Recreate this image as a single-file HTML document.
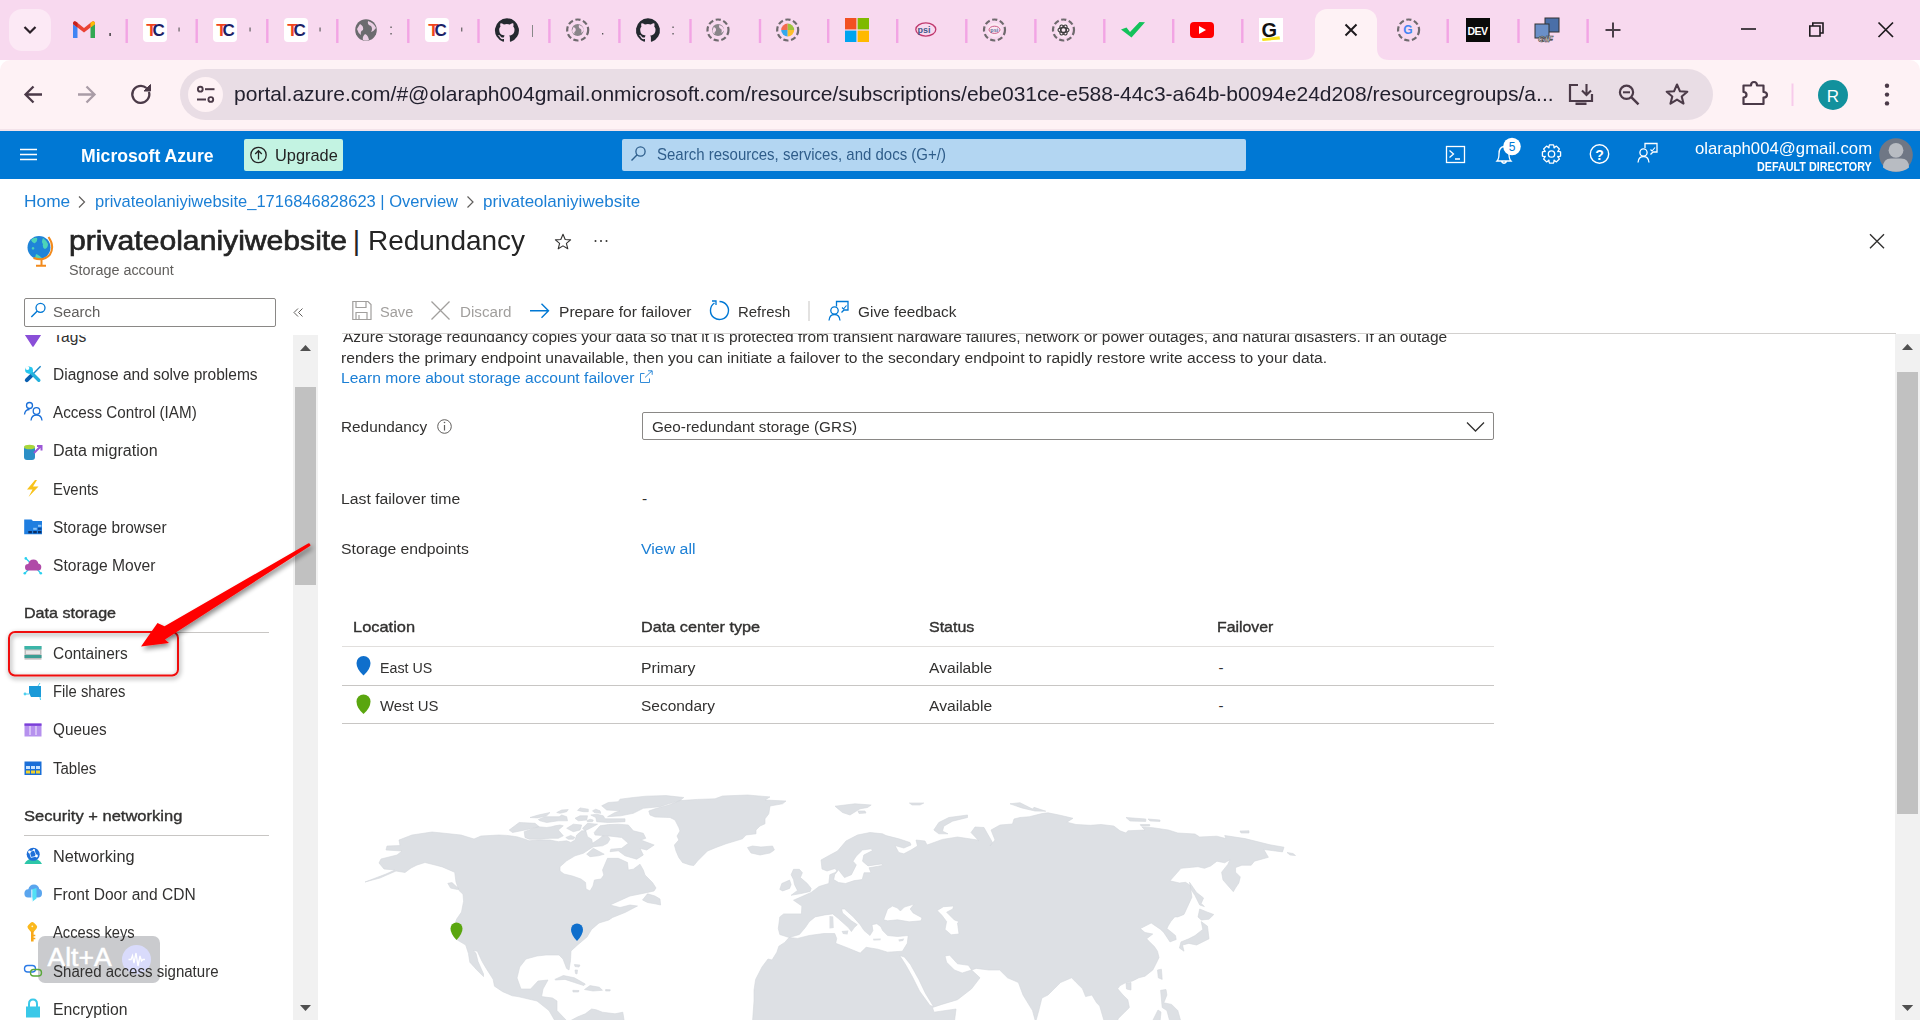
<!DOCTYPE html>
<html><head><meta charset="utf-8"><title>privateolaniyiwebsite | Redundancy - Microsoft Azure</title>
<style>
*{margin:0;padding:0;box-sizing:border-box}
html,body{width:1920px;height:1020px;overflow:hidden;background:#fff;font-family:"Liberation Sans",sans-serif;position:relative}
.a{position:absolute}
.t{position:absolute;white-space:nowrap;line-height:1;font-family:"Liberation Sans",sans-serif}
svg{position:absolute;overflow:visible}

</style></head><body>
<!-- tab strip -->
<div class="a" style="left:0;top:0;width:1920px;height:60px;background:#f8d9ef"></div>
<div class="a" style="left:9px;top:9px;width:42px;height:42px;border-radius:13px;background:#fce9f5"></div>
<svg style="left:0;top:0" width="1920" height="60">
  <path d="M24.5 27 L30 32.5 L35.5 27" fill="none" stroke="#2a2028" stroke-width="2.2"/>
</svg>
<!-- toolbar -->
<div class="a" style="left:0;top:60px;width:1920px;height:69px;background:#fef2f5;border-radius:10px 10px 0 0"></div>
<div class="a" style="left:0;top:129px;width:1920px;height:2px;background:#f3e3ea"></div>
<!-- active tab -->
<div class="a" style="left:1315px;top:9px;width:62px;height:52px;background:#fef2f5;border-radius:12px 12px 0 0"></div>
<svg style="left:0;top:0" width="1920" height="131">
  <path d="M1303 60 Q1315 60 1315 48 L1315 60 Z" fill="#fef2f5"/>
  <path d="M1389 60 Q1377 60 1377 48 L1377 60 Z" fill="#fef2f5"/>
  <path d="M1345.5 24.5 L1356.5 35.5 M1356.5 24.5 L1345.5 35.5" stroke="#1f1a1e" stroke-width="2"/>
</svg>
<!-- url bar -->
<div class="a" style="left:180px;top:69px;width:1533px;height:51px;border-radius:26px;background:#e9dde5"></div>
<div class="a" style="left:188px;top:77px;width:35px;height:35px;border-radius:50%;background:#fef2f5"></div>
<svg style="left:0;top:0" width="1920" height="60">
<rect x="125.5" y="19" width="2.4" height="24" fill="#f2a4e4"/>
<rect x="195.5" y="19" width="2.4" height="24" fill="#f2a4e4"/>
<rect x="266.1" y="19" width="2.4" height="24" fill="#f2a4e4"/>
<rect x="336.1" y="19" width="2.4" height="24" fill="#f2a4e4"/>
<rect x="407.1" y="19" width="2.4" height="24" fill="#f2a4e4"/>
<rect x="477.3" y="19" width="2.4" height="24" fill="#f2a4e4"/>
<rect x="548.1999999999999" y="19" width="2.4" height="24" fill="#f2a4e4"/>
<rect x="618.1999999999999" y="19" width="2.4" height="24" fill="#f2a4e4"/>
<rect x="689.3" y="19" width="2.4" height="24" fill="#f2a4e4"/>
<rect x="758.8" y="19" width="2.4" height="24" fill="#f2a4e4"/>
<rect x="827.0" y="19" width="2.4" height="24" fill="#f2a4e4"/>
<rect x="896.0" y="19" width="2.4" height="24" fill="#f2a4e4"/>
<rect x="965.0999999999999" y="19" width="2.4" height="24" fill="#f2a4e4"/>
<rect x="1034.2" y="19" width="2.4" height="24" fill="#f2a4e4"/>
<rect x="1103.1" y="19" width="2.4" height="24" fill="#f2a4e4"/>
<rect x="1172.0" y="19" width="2.4" height="24" fill="#f2a4e4"/>
<rect x="1241.1" y="19" width="2.4" height="24" fill="#f2a4e4"/>
<rect x="1446.5" y="19" width="2.4" height="24" fill="#f2a4e4"/>
<rect x="1517.3" y="19" width="2.4" height="24" fill="#f2a4e4"/>
<rect x="1586.3999999999999" y="19" width="2.4" height="24" fill="#f2a4e4"/>
<g transform="translate(73,21)">
<path d="M0 3 L0 17 L4.5 17 L4.5 6.5 Z" fill="#4285f4"/>
<path d="M17.5 6.5 L17.5 17 L22 17 L22 3 Z" fill="#34a853"/>
<path d="M0 3 Q0 -1 3.5 1 L11 7 L18.5 1 Q22 -1 22 3 L17.5 6.5 L11 11.5 L4.5 6.5 Z" fill="#ea4335"/>
<path d="M17.5 6.5 L22 3 Q22 -1 18.5 1 L17.5 1.8Z" fill="#fbbc04"/>
<path d="M0 3 Q0 -1 3.5 1 L4.5 1.8 L4.5 6.5Z" fill="#c5221f"/>
</g>
<rect x="143" y="18" width="24" height="24" rx="4" fill="#fff"/>
<text x="146.2" y="36" font-family="Liberation Sans" font-weight="700" font-size="17" fill="#f0451c" letter-spacing="-2">T</text>
<text x="152.5" y="36" font-family="Liberation Sans" font-weight="700" font-size="17" fill="#1b2266">C</text>
<rect x="213" y="18" width="24" height="24" rx="4" fill="#fff"/>
<text x="216.2" y="36" font-family="Liberation Sans" font-weight="700" font-size="17" fill="#f0451c" letter-spacing="-2">T</text>
<text x="222.5" y="36" font-family="Liberation Sans" font-weight="700" font-size="17" fill="#1b2266">C</text>
<rect x="284" y="18" width="24" height="24" rx="4" fill="#fff"/>
<text x="287.2" y="36" font-family="Liberation Sans" font-weight="700" font-size="17" fill="#f0451c" letter-spacing="-2">T</text>
<text x="293.5" y="36" font-family="Liberation Sans" font-weight="700" font-size="17" fill="#1b2266">C</text>
<rect x="425" y="18" width="24" height="24" rx="4" fill="#fff"/>
<text x="428.2" y="36" font-family="Liberation Sans" font-weight="700" font-size="17" fill="#f0451c" letter-spacing="-2">T</text>
<text x="434.5" y="36" font-family="Liberation Sans" font-weight="700" font-size="17" fill="#1b2266">C</text>
<circle cx="366" cy="30" r="10.8" fill="#6b6b6e"/>
<path d="M360 24 q4 2 3 6 q-3 1 -2 5 q-3-2-4-6z M368 21 q-1 4 3 5 q2 3 0 6 q3-1 5-4 q-2-5-8-7z M365 34 q3 1 4 6 q-3 1 -6 0 q-1-3 2-6z" fill="#f8d9ef" opacity=".9"/>
<g transform="translate(495,18)"><path fill="#24292f" d="M12 0.3a12 12 0 0 0-3.8 23.4c.6.1.8-.3.8-.6v-2c-3.3.7-4-1.6-4-1.6-.6-1.4-1.4-1.8-1.4-1.8-1-.7.1-.7.1-.7 1.2.1 1.8 1.2 1.8 1.2 1 1.8 2.8 1.3 3.5 1 0-.8.4-1.3.7-1.6-2.7-.3-5.5-1.3-5.5-6 0-1.2.5-2.3 1.3-3.1-.2-.4-.6-1.6 0-3.2 0 0 1-.3 3.4 1.2a11.5 11.5 0 0 1 6 0c2.3-1.5 3.3-1.2 3.3-1.2.6 1.6.2 2.8 0 3.2.9.8 1.3 1.9 1.3 3.2 0 4.6-2.8 5.6-5.5 5.9.5.4.9 1 .9 2.2v3.3c0 .3.1.7.8.6A12 12 0 0 0 12 .3"/></g>
<g transform="translate(636,18)"><path fill="#24292f" d="M12 0.3a12 12 0 0 0-3.8 23.4c.6.1.8-.3.8-.6v-2c-3.3.7-4-1.6-4-1.6-.6-1.4-1.4-1.8-1.4-1.8-1-.7.1-.7.1-.7 1.2.1 1.8 1.2 1.8 1.2 1 1.8 2.8 1.3 3.5 1 0-.8.4-1.3.7-1.6-2.7-.3-5.5-1.3-5.5-6 0-1.2.5-2.3 1.3-3.1-.2-.4-.6-1.6 0-3.2 0 0 1-.3 3.4 1.2a11.5 11.5 0 0 1 6 0c2.3-1.5 3.3-1.2 3.3-1.2.6 1.6.2 2.8 0 3.2.9.8 1.3 1.9 1.3 3.2 0 4.6-2.8 5.6-5.5 5.9.5.4.9 1 .9 2.2v3.3c0 .3.1.7.8.6A12 12 0 0 0 12 .3"/></g>
<circle cx="577.7" cy="30" r="10.5" fill="none" stroke="#6f6a6e" stroke-width="2.2" stroke-dasharray="5.2 2.6"/><circle cx="577.7" cy="30" r="6" fill="#8a858a"/><path d="M573.5 27 q3 1 2 4 q-2 1-1 3 q-2-1-2.5-3z M579 25 q-1 3 2 4 q1 2 0 4 q2-1 3-3 q-1-4-5-5z" fill="#f8d9ef"/>
<circle cx="718" cy="30" r="10.5" fill="none" stroke="#6f6a6e" stroke-width="2.2" stroke-dasharray="5.2 2.6"/><circle cx="718" cy="30" r="6" fill="#8a858a"/><path d="M713.8 27 q3 1 2 4 q-2 1-1 3 q-2-1-2.5-3z M719.3 25 q-1 3 2 4 q1 2 0 4 q2-1 3-3 q-1-4-5-5z" fill="#f8d9ef"/>
<circle cx="787.7" cy="30" r="10.5" fill="none" stroke="#6f6a6e" stroke-width="2.2" stroke-dasharray="5.2 2.6"/><path d="M787.7 30 L787.7 23.5 A6.5 6.5 0 0 0 781.2 30Z" fill="#f26b4f"/><path d="M787.7 30 L794.2 30 A6.5 6.5 0 0 0 787.7 23.5Z" fill="#9fc43c"/><path d="M787.7 30 L781.2 30 A6.5 6.5 0 0 0 787.7 36.5Z" fill="#35a8ec"/><path d="M787.7 30 L787.7 36.5 A6.5 6.5 0 0 0 794.2 30Z" fill="#fbbf2d"/>
<rect x="845" y="18" width="11.4" height="11.4" fill="#f25022"/><rect x="857.6" y="18" width="11.4" height="11.4" fill="#7fba00"/><rect x="845" y="30.6" width="11.4" height="11.4" fill="#00a4ef"/><rect x="857.6" y="30.6" width="11.4" height="11.4" fill="#ffb900"/>
<ellipse cx="925.8" cy="29.5" rx="10" ry="6.6" fill="none" stroke="#c0396e" stroke-width="1.3"/><text x="917.5" y="33" font-family="Liberation Sans" font-weight="700" font-size="9" fill="#3f5a8a">psi</text>
<circle cx="994.5" cy="30" r="10.5" fill="none" stroke="#6f6a6e" stroke-width="2.2" stroke-dasharray="5.2 2.6"/><circle cx="994.5" cy="30" r="7" fill="#fbe8f3"/><ellipse cx="994.5" cy="29.8" rx="5.5" ry="3.6" fill="none" stroke="#c0396e" stroke-width=".8"/><text x="990.3" y="32" font-family="Liberation Sans" font-weight="700" font-size="5.5" fill="#5a6e9a">psi</text>
<circle cx="1063.5" cy="30" r="10.5" fill="none" stroke="#6f6a6e" stroke-width="2.2" stroke-dasharray="5.2 2.6"/><circle cx="1063.5" cy="30" r="7.5" fill="#fbe8f3"/><g fill="none" stroke="#3a3a3a" stroke-width="1.1"><ellipse cx="1063.5" cy="30" rx="5.5" ry="2.4"/><ellipse cx="1063.5" cy="30" rx="5.5" ry="2.4" transform="rotate(60 1063.5 30)"/><ellipse cx="1063.5" cy="30" rx="5.5" ry="2.4" transform="rotate(120 1063.5 30)"/></g>
<path d="M1121 29.5 L1126.5 27.5 L1130 32 L1139.5 22 L1145 22.3 L1131.5 37.4 Z" fill="#14c25b"/>
<rect x="1190" y="22" width="24" height="16" rx="4" fill="#ff0000"/><path d="M1199 26 L1206 30 L1199 34 Z" fill="#fff"/>
<rect x="1259" y="18" width="24" height="24" fill="#fff"/><text x="1261.5" y="37" font-family="Liberation Sans" font-weight="700" font-size="20" fill="#111">G</text><path d="M1262 38.5 L1279.5 36.3 L1280 39.5 L1262.5 41 Z" fill="#f8e01a"/>
<circle cx="1408.6" cy="30" r="10.5" fill="none" stroke="#6f6a6e" stroke-width="2.2" stroke-dasharray="5.2 2.6"/><text x="1403.2" y="34.4" font-family="Liberation Sans" font-weight="700" font-size="12" fill="#4285f4">G</text>
<rect x="1466" y="18" width="24" height="24" fill="#0a0a0a"/><text x="1467.6" y="35.2" font-family="Liberation Sans" font-weight="700" font-size="10.5" fill="#fff" letter-spacing="-0.6">DEV</text>
<g><rect x="1545" y="18" width="14" height="14" fill="#4a6fa8" stroke="#333" stroke-width="1"/><rect x="1535" y="24" width="14" height="14" fill="#6a8fc8" stroke="#333" stroke-width="1"/><text x="1538" y="42" font-family="Liberation Sans" font-weight="700" font-style="italic" font-size="9" fill="#fff" stroke="#333" stroke-width=".6">GIF</text></g>
<path d="M1613 22.5 V37.5 M1605.5 30 H1620.5" stroke="#4b3f49" stroke-width="2"/>
<path d="M1741 29 H1756" stroke="#1e1a1e" stroke-width="1.6"/>
<path d="M1809.8 26 H1820 V36 H1809.8 Z M1812.8 26 V23 H1823 V33 H1820" fill="none" stroke="#1e1a1e" stroke-width="1.6"/>
<path d="M1878.5 22.5 L1893 37 M1893 22.5 L1878.5 37" stroke="#1e1a1e" stroke-width="1.7"/>
<rect x="109.4" y="33" width="1.4" height="3" fill="#333"/>
<rect x="178.5" y="27.5" width="1.1" height="4" fill="#555"/>
<rect x="249.5" y="27.5" width="1.1" height="4" fill="#555"/>
<rect x="319.5" y="27.5" width="1.1" height="4" fill="#555"/>
<rect x="390.4" y="26.5" width="1.3" height="1.5" fill="#555"/><rect x="390.4" y="33" width="1.3" height="1.5" fill="#555"/>
<rect x="461.2" y="27.5" width="1.1" height="4" fill="#555"/>
<rect x="532.0" y="25" width="1" height="12" fill="#888"/>
<rect x="602.0" y="33" width="1.3" height="1.5" fill="#555"/>
<rect x="672.4" y="26.5" width="1.3" height="1.5" fill="#555"/><rect x="672.4" y="33" width="1.3" height="1.5" fill="#555"/>
</svg><svg style="left:0;top:0" width="1920" height="131">
<path d="M42 94.5 H25.5 M33.5 86.5 L25.5 94.5 L33.5 102.5" fill="none" stroke="#4b3a48" stroke-width="2.3"/>
<path d="M78 94.5 H94.5 M86.5 86.5 L94.5 94.5 L86.5 102.5" fill="none" stroke="#a99ca6" stroke-width="2.3"/>
<path d="M149 92 A8.5 8.5 0 1 1 146.5 88" fill="none" stroke="#4b3a48" stroke-width="2.3"/><path d="M150.5 84.5 V91 H144 Z" fill="#4b3a48" stroke="#4b3a48" stroke-width="1"/>
<circle cx="200.3" cy="89.2" r="2.4" fill="none" stroke="#4b3a48" stroke-width="1.9"/><path d="M205 89.2 H214.5" stroke="#4b3a48" stroke-width="2"/>
<circle cx="210.8" cy="99.5" r="2.4" fill="none" stroke="#4b3a48" stroke-width="1.9"/><path d="M197 99.5 H206" stroke="#4b3a48" stroke-width="2"/>
<path d="M1578 85 H1570 V101 H1592 V94" fill="none" stroke="#4b3a48" stroke-width="2.2"/><path d="M1586.5 84 V95 M1582 90.5 L1586.5 95 L1591 90.5" fill="none" stroke="#4b3a48" stroke-width="2.1"/><rect x="1575.5" y="102.5" width="11" height="2.5" fill="#4b3a48"/>
<circle cx="1626.5" cy="92.3" r="6.6" fill="none" stroke="#4b3a48" stroke-width="2.2"/><path d="M1623 92.3 H1630" stroke="#4b3a48" stroke-width="2"/><path d="M1631.5 97.3 L1638.5 104.3" stroke="#4b3a48" stroke-width="2.4"/>
<path d="M1677 84.5 L1680 91.3 L1687.3 91.8 L1681.7 96.5 L1683.5 103.6 L1677 99.6 L1670.5 103.6 L1672.3 96.5 L1666.7 91.8 L1674 91.3 Z" fill="none" stroke="#4b3a48" stroke-width="2.1" stroke-linejoin="round"/>
<path d="M1743.5 85.5 H1751 Q1751 82 1754 82 Q1757 82 1757 85.5 H1763.5 V92 Q1767 92 1767 94.8 Q1767 97.6 1763.5 97.6 V104 H1743.5 V97.5 Q1746.5 97.5 1746.5 94.8 Q1746.5 92 1743.5 92 Z" fill="none" stroke="#4b3a48" stroke-width="2.2" stroke-linejoin="round"/>
<rect x="1791.5" y="83.5" width="2" height="22.5" fill="#f7cbeb"/>
<circle cx="1833" cy="95" r="15" fill="#12919d"/><text x="1833" y="101.5" text-anchor="middle" font-family="Liberation Sans" font-size="17" fill="#fff">R</text>
<circle cx="1887" cy="85.8" r="2.2" fill="#4b3a48"/><circle cx="1887" cy="94.6" r="2.2" fill="#4b3a48"/><circle cx="1887" cy="103.4" r="2.2" fill="#4b3a48"/>
</svg><div class="t" style="left:234.425px;top:83.42px;font-size:21px;color:#22202e;transform:scaleX(1.0010);transform-origin:0 0;">portal.azure.com/#@olaraph004gmail.onmicrosoft.com/resource/subscriptions/ebe031ce-e588-44c3-a64b-b0094e24d208/resourcegroups/a...</div>

<div class="a" style="left:0;top:131px;width:1920px;height:48px;background:#0078d4"></div>
<div class="a" style="left:244px;top:139px;width:99px;height:31.5px;background:#c3f3e2;border-radius:2px"></div>
<div class="a" style="left:622px;top:139px;width:624px;height:32px;background:#b3d6f2;border-radius:2px"></div>
<svg style="left:0;top:131px" width="1920" height="48">
<path d="M20 18.5 H37 M20 23.5 H37 M20 28.5 H37" stroke="#fff" stroke-width="1.3"/>
<circle cx="258.5" cy="24" r="7.7" fill="none" stroke="#242424" stroke-width="1.3"/><path d="M258.5 28.5 V19.8 M255.2 23 L258.5 19.7 L261.8 23" fill="none" stroke="#242424" stroke-width="1.3"/>
<circle cx="640.5" cy="20.5" r="4.6" fill="none" stroke="#2e5e8c" stroke-width="1.3"/><path d="M637.2 23.8 L631.5 29.5" stroke="#2e5e8c" stroke-width="1.4"/>
<rect x="1446.5" y="15.5" width="18" height="16" fill="none" stroke="#fff" stroke-width="1.3"/><path d="M1449.5 19.5 L1453.5 23 L1449.5 26.5 M1455 28 H1460" fill="none" stroke="#fff" stroke-width="1.3"/>
<path d="M1497 30 Q1499 28 1499 23 Q1499 16 1504 15.5 Q1509 16 1509 23 Q1509 28 1511 30 Z M1501.5 30.5 Q1504 34 1506.5 30.5" fill="none" stroke="#fff" stroke-width="1.3"/>
<circle cx="1512" cy="15.5" r="8.8" fill="#fff"/><text x="1512" y="20" text-anchor="middle" font-family="Liberation Sans" font-size="12" fill="#0078d4">5</text>
<path d="M1560.58 20.97 L1560.58 25.03 L1557.71 25.77 L1557.85 25.43 L1559.35 27.98 L1556.48 30.85 L1553.93 29.35 L1554.27 29.21 L1553.53 32.08 L1549.47 32.08 L1548.73 29.21 L1549.07 29.35 L1546.52 30.85 L1543.65 27.98 L1545.15 25.43 L1545.29 25.77 L1542.42 25.03 L1542.42 20.97 L1545.29 20.23 L1545.15 20.57 L1543.65 18.02 L1546.52 15.15 L1549.07 16.65 L1548.73 16.79 L1549.47 13.92 L1553.53 13.92 L1554.27 16.79 L1553.93 16.65 L1556.48 15.15 L1559.35 18.02 L1557.85 20.57 L1557.71 20.23 Z" fill="none" stroke="#fff" stroke-width="1.3" stroke-linejoin="round"/><circle cx="1551.5" cy="23" r="3.2" fill="none" stroke="#fff" stroke-width="1.3"/>
<circle cx="1599.5" cy="23" r="9.2" fill="none" stroke="#fff" stroke-width="1.4"/><text x="1599.5" y="28.5" text-anchor="middle" font-family="Liberation Sans" font-size="14" font-weight="700" fill="#fff">?</text>
<path d="M1645 17 V12.5 H1657 V21 H1653 L1650.5 23.5" fill="none" stroke="#fff" stroke-width="1.3"/><circle cx="1643.5" cy="21.5" r="3.6" fill="none" stroke="#fff" stroke-width="1.3"/><path d="M1638 31.5 Q1638.5 25.5 1643.5 25.5 Q1648.5 25.5 1649 31.5" fill="none" stroke="#fff" stroke-width="1.3"/><path d="M1650.5 18.5 L1652 20 L1655 16.5" fill="none" stroke="#fff" stroke-width="1.1"/>
<circle cx="1896" cy="24" r="16.8" fill="#6f7785"/><circle cx="1896" cy="19.3" r="7.4" fill="#b8bcc2"/><path d="M1883 36.5 Q1883 27.5 1891 27.5 H1901 Q1909 27.5 1909 36.5 Q1903.5 40.8 1896 40.8 Q1888.5 40.8 1883 36.5Z" fill="#b8bcc2"/>
</svg>
<div class="t" style="left:80.605px;top:146.66px;font-size:18.6px;color:#fff;font-weight:700;transform:scaleX(0.9481);transform-origin:0 0;">Microsoft Azure</div>

<div class="t" style="left:274.785px;top:146.89px;font-size:16.2px;color:#242424;transform:scaleX(1.0116);transform-origin:0 0;">Upgrade</div>

<div class="t" style="left:656.8225px;top:146.71px;font-size:15.7px;color:#2f5d8a;transform:scaleX(0.9565);transform-origin:0 0;">Search resources, services, and docs (G+/)</div>

<div class="t" style="left:1694.785px;top:140.49px;font-size:16.2px;color:#fff;transform:scaleX(1.0346);transform-origin:0 0;">olaraph004@gmail.com</div>

<div class="t" style="left:1757.04px;top:160.76px;font-size:12.8px;color:#fff;font-weight:700;transform:scaleX(0.8422);transform-origin:0 0;">DEFAULT DIRECTORY</div>

<div class="t" style="left:23.535px;top:193.29px;font-size:16.2px;color:#1b7fd5;transform:scaleX(1.0707);transform-origin:0 0;">Home</div>

<div class="t" style="left:94.785px;top:193.29px;font-size:16.2px;color:#1b7fd5;transform:scaleX(1.0194);transform-origin:0 0;">privateolaniyiwebsite_1716846828623 | Overview</div>

<div class="t" style="left:482.785px;top:193.29px;font-size:16.2px;color:#1b7fd5;transform:scaleX(1.0521);transform-origin:0 0;">privateolaniyiwebsite</div>

<svg style="left:0;top:0" width="1920" height="300">
<path d="M79 196.5 L84.5 202 L79 207.5 M467.5 196.5 L473 202 L467.5 207.5" fill="none" stroke="#605e5c" stroke-width="1.2"/>
<circle cx="39" cy="247.5" r="11.5" fill="#1f84d8"/><path d="M31 240 q3 -3 6 -2 q1 3 -2 5 q-2 1 -4 -3z M43 238 q3 2 5 6 q0 4 -3 5 q-3-1-2-5 q-2-2 0-6z M36 254 q3 1 6 4 q-4 1.5 -7 0z M33 247 a1.3 1.3 0 1 0 .1 0z" fill="#4dd4b8"/>
<path d="M48.5 237 Q55 246 50 254.5 Q44 261.5 33.5 258" fill="none" stroke="#f28a1c" stroke-width="2"/><path d="M41.5 260 V265.5 M36 265.8 H46" stroke="#f28a1c" stroke-width="2"/>
<path d="M563 234.3 L565.2 239.5 L570.6 239.9 L566.4 243.4 L567.8 248.8 L563 245.9 L558.2 248.8 L559.6 243.4 L555.4 239.9 L560.8 239.5 Z" fill="none" stroke="#323130" stroke-width="1.1" stroke-linejoin="round"/>
<circle cx="595.5" cy="241" r="1" fill="#323130"/><circle cx="601" cy="241" r="1" fill="#323130"/><circle cx="606.5" cy="241" r="1" fill="#323130"/>
<path d="M1870 234.3 L1884 248.3 M1884 234.3 L1870 248.3" stroke="#323130" stroke-width="1.4"/>
</svg>
<div class="t" style="left:68.6625px;top:225.87px;font-size:28.5px;color:#242424;transform:scaleX(1.0571);transform-origin:0 0;-webkit-text-stroke:0.68px #242424;">privateolaniyiwebsite</div>

<div class="t" style="left:352.8625px;top:225.87px;font-size:28.5px;color:#242424;">|</div>

<div class="t" style="left:368.3625px;top:225.87px;font-size:28.5px;color:#242424;transform:scaleX(0.9810);transform-origin:0 0;">Redundancy</div>

<div class="t" style="left:68.65px;top:263.15px;font-size:14.0px;color:#605e5c;transform:scaleX(1.0275);transform-origin:0 0;">Storage account</div>

<div class="a" style="left:24px;top:298px;width:252px;height:28.5px;border:1px solid #8a8886;border-radius:2px"></div>
<div class="t" style="left:53.06px;top:303.83px;font-size:15.2px;color:#605e5c;transform:scaleX(0.9847);transform-origin:0 0;">Search</div>

<svg style="left:0;top:0" width="330" height="340">
<circle cx="40.5" cy="307.8" r="4.5" fill="none" stroke="#0078d4" stroke-width="1.3"/><path d="M37.3 311 L31.3 317" stroke="#0078d4" stroke-width="1.4"/>
<path d="M298 308.5 L294 312.5 L298 316.5 M302.5 308.5 L298.5 312.5 L302.5 316.5" fill="none" stroke="#605e5c" stroke-width="1"/>
</svg>
<div class="a" style="left:38px;top:936px;width:122px;height:47px;border-radius:7px;background:rgba(150,152,158,0.5)"></div>
<svg style="left:0;top:0" width="300" height="1020"><circle cx="136.5" cy="959.5" r="14.5" fill="#d9dbfb"/></svg>
<div class="a" style="left:0;top:335px;width:293px;height:685px;overflow:hidden">
<div class="a" style="left:0;top:-335px;width:293px;height:1020px">
<div class="t" style="left:53.33px;top:328.54px;font-size:15.6px;color:#323130;">Tags</div>

<div class="t" style="left:53.33px;top:366.99px;font-size:15.6px;color:#323130;transform:scaleX(0.9959);transform-origin:0 0;">Diagnose and solve problems</div>

<div class="t" style="left:53.33px;top:405.24px;font-size:15.6px;color:#323130;transform:scaleX(0.9757);transform-origin:0 0;">Access Control (IAM)</div>

<div class="t" style="left:53.33px;top:443.49px;font-size:15.6px;color:#323130;transform:scaleX(1.0319);transform-origin:0 0;">Data migration</div>

<div class="t" style="left:53.33px;top:481.74px;font-size:15.6px;color:#323130;transform:scaleX(0.9537);transform-origin:0 0;">Events</div>

<div class="t" style="left:53.33px;top:519.99px;font-size:15.6px;color:#323130;transform:scaleX(0.9923);transform-origin:0 0;">Storage browser</div>

<div class="t" style="left:53.33px;top:558.24px;font-size:15.6px;color:#323130;transform:scaleX(1.0016);transform-origin:0 0;">Storage Mover</div>

<div class="t" style="left:53.33px;top:645.99px;font-size:15.6px;color:#323130;transform:scaleX(0.9899);transform-origin:0 0;">Containers</div>

<div class="t" style="left:53.33px;top:684.24px;font-size:15.6px;color:#323130;transform:scaleX(0.9487);transform-origin:0 0;">File shares</div>

<div class="t" style="left:53.33px;top:722.49px;font-size:15.6px;color:#323130;transform:scaleX(0.9807);transform-origin:0 0;">Queues</div>

<div class="t" style="left:53.33px;top:760.74px;font-size:15.6px;color:#323130;transform:scaleX(0.9621);transform-origin:0 0;">Tables</div>

<div class="t" style="left:53.33px;top:848.89px;font-size:15.6px;color:#323130;transform:scaleX(1.0455);transform-origin:0 0;">Networking</div>

<div class="t" style="left:53.33px;top:887.14px;font-size:15.6px;color:#323130;transform:scaleX(0.9981);transform-origin:0 0;">Front Door and CDN</div>

<div class="t" style="left:53.33px;top:925.39px;font-size:15.6px;color:#323130;transform:scaleX(0.9411);transform-origin:0 0;">Access keys</div>

<div class="t" style="left:53.33px;top:963.64px;font-size:15.6px;color:#323130;transform:scaleX(0.9644);transform-origin:0 0;">Shared access signature</div>

<div class="t" style="left:53.33px;top:1001.89px;font-size:15.6px;color:#323130;transform:scaleX(1.0106);transform-origin:0 0;">Encryption</div>

<div class="t" style="left:24.39px;top:606.47px;font-size:14.8px;color:#323130;transform:scaleX(1.0865);transform-origin:0 0;-webkit-text-stroke:0.36px #323130;">Data storage</div>

<div class="t" style="left:24.09px;top:809.47px;font-size:14.8px;color:#323130;transform:scaleX(1.1160);transform-origin:0 0;-webkit-text-stroke:0.36px #323130;">Security + networking</div>

<div class="a" style="left:24px;top:631.5px;width:245px;height:1px;background:#c8c6c4"></div>
<div class="a" style="left:24px;top:834.8px;width:245px;height:1px;background:#c8c6c4"></div>
<svg style="left:0;top:0" width="293" height="1020">
<path d="M24.5 333 H41.5 L33 346 Z" fill="#8a4fd8" stroke="#8a4fd8" stroke-width="1.5" stroke-linejoin="round"/>
<path d="M40.6 366.3 L33.5 373.4" stroke="#1a86c8" stroke-width="1.4"/><path d="M32.2 374.8 L26.8 380.2" stroke="#0a5fb0" stroke-width="4" stroke-linecap="round"/><path d="M30 371.5 L38.8 380.2" stroke="#22b0dc" stroke-width="3.4" stroke-linecap="round"/><path d="M29.2 366.2 A3.6 3.6 0 1 0 32.2 370.8 L31 371.8" fill="#26c6ee"/><circle cx="29.6" cy="370.2" r="3.4" fill="#26c6ee"/><circle cx="27.4" cy="368" r="1.9" fill="#fff"/>
<circle cx="29.5" cy="405.5" r="3" fill="none" stroke="#1a6fd8" stroke-width="1.3"/><circle cx="36.5" cy="411" r="3.3" fill="none" stroke="#1a6fd8" stroke-width="1.3"/><path d="M24.5 414.5 Q25 409.5 29.5 409.5 M31 420.5 Q31.5 415 36.5 415 Q41.5 415 42 420.5" fill="none" stroke="#1a6fd8" stroke-width="1.3"/>
<rect x="24" y="446" width="11" height="14" rx="3" fill="#2b8fc6"/><ellipse cx="29.5" cy="447" rx="5.5" ry="2.3" fill="#a8d63a"/><path d="M34 453 L41 446 M37 446 H41.5 V450.5" fill="none" stroke="#9b57d6" stroke-width="2"/>
<path d="M35 480 L27 489.5 H32.5 L28.5 497 L38.5 486.5 H33 L37 480 Z" fill="#f8c21a"/>
<path d="M24.2 519.6 H31.5 L33 521 H42 V534.3 H24.2 Z" fill="#1f7ee0"/><rect x="28.3" y="531" width="3.6" height="2.3" fill="#0b2f66"/><rect x="33.2" y="531" width="3.6" height="2.3" fill="#0b2f66"/><rect x="38" y="531" width="3.4" height="2.3" fill="#0b2f66"/><rect x="33.2" y="527.8" width="3.6" height="2" fill="#8cc4f8"/><rect x="38" y="527.8" width="3.4" height="2" fill="#0b4d9e"/><rect x="38" y="524.8" width="3.4" height="2" fill="#8cc4f8"/>
<path d="M25.7 558.3 L29.5 562 M24.5 573.6 L28.5 569.5 M41 573.6 L37.5 569.5" stroke="#2ad0ee" stroke-width="1.3"/><circle cx="25.8" cy="558.4" r="1.3" fill="#2ad0ee"/><circle cx="24.8" cy="573.3" r="1.3" fill="#2ad0ee"/><circle cx="40.8" cy="573.3" r="1.3" fill="#2ad0ee"/><path d="M28 570.5 Q25 570.5 25 567.3 Q25 564 28.3 564 Q29 559.5 33.5 559.5 Q37.5 559.5 38.3 563.5 Q41.3 564 41.3 567 Q41.3 570.5 38 570.5Z" fill="#b04aa8"/>
<rect x="24.5" y="646" width="17" height="13.6" fill="#bdbdbd"/><rect x="24.5" y="646" width="17" height="3.4" fill="#3bb5a8"/><rect x="24.5" y="655" width="17" height="3" fill="#3b9e94"/><rect x="26" y="650.5" width="14" height="3.5" fill="#e8e8e8"/>
<path d="M29 686 H41 V697 H31 L29 693 Z" fill="#1a9ad8"/><circle cx="25" cy="694" r="1.4" fill="#4fd0f0"/><path d="M25 694 H29 M38 686 L40 683 M40 697 L40.5 700" stroke="#4fd0f0" stroke-width="1"/>
<rect x="24.5" y="723.5" width="17" height="13" fill="#b691ee"/><rect x="24.5" y="723.5" width="17" height="2.3" fill="#7b3fd8"/><path d="M30 726 V735 M36 726 V735" stroke="#e6d9fa" stroke-width="1.3"/>
<rect x="24.5" y="761.5" width="17" height="13.5" fill="#1a6fd8"/><rect x="26" y="766" width="14" height="3" fill="#c9e4ff"/><rect x="26" y="770.5" width="14" height="3" fill="#f2d22c"/><path d="M30.5 765 V774 M35.5 765 V774" stroke="#1a6fd8" stroke-width="1"/>
<path d="M24.4 864 Q27 858.5 33 858.5 Q39 858.5 42 864 Z" fill="#2cc6a8"/><circle cx="33.2" cy="854.3" r="6.5" fill="#1f6fd8"/><path d="M29.5 852 L34 850 L36.5 856 L31 857.5 Z" fill="none" stroke="#cfe6ff" stroke-width=".9"/><circle cx="29.5" cy="852" r="1.4" fill="#fff"/><circle cx="36.5" cy="856" r="1.4" fill="#fff"/><circle cx="34" cy="850" r="1.1" fill="#fff"/>
<path d="M28 897.5 Q24.4 897.5 24.4 893.5 Q24.4 889.5 28.3 889.3 Q29.5 884.5 34 884.5 Q38.3 884.5 39.3 889 Q42 889.5 42 893.2 Q42 897.5 38 897.5Z" fill="#5aa5ee"/><path d="M31.8 889.5 L36.5 888 V898.5 L32.5 901.5 Z" fill="#52e0f5"/><path d="M31.8 889.5 V899 L32.5 901.5" stroke="#e8f6ff" stroke-width="1" fill="none"/>
<path d="M29.8 927 L32.3 924.5 L34.8 927 L32.3 930Z" fill="#fbb81c" stroke="#fbb81c" stroke-width="4.6" stroke-linejoin="round"/><circle cx="32.3" cy="926.3" r=".9" fill="#fff6d0"/><path d="M32.3 931 V941.5" stroke="#f7a81a" stroke-width="2.6"/><path d="M33 935.5 H35.3 M33 938.5 H35.3" stroke="#f7a81a" stroke-width="1.3"/>
<rect x="24.5" y="965.5" width="11" height="6.5" rx="3.2" fill="none" stroke="#2c7be6" stroke-width="1.4"/><rect x="30.5" y="969.5" width="11" height="6.5" rx="3.2" fill="none" stroke="#5aa83a" stroke-width="1.4"/>
<path d="M29 1007 V1004 Q29 999.5 33 999.5 Q37 999.5 37 1004 V1007" fill="none" stroke="#3ac8e8" stroke-width="2"/><rect x="26" y="1006.5" width="14" height="11" fill="#3ac8e8"/>
</svg>
</div></div>
<div class="a" style="left:293px;top:335px;width:25px;height:685px;background:#f1f1f1"></div>
<div class="a" style="left:295px;top:387px;width:21px;height:198px;background:#c1c1c1"></div>
<svg style="left:0;top:0" width="330" height="1020"><path d="M300 351 L305.5 345 L311 351Z" fill="#505050"/><path d="M300 1005 L305.5 1011 L311 1005Z" fill="#505050"/></svg>
<svg style="left:0;top:290px" width="1000" height="45">
<path d="M352.8 11.5 H368 L371 14.5 V29.5 H352.8 Z" fill="none" stroke="#a19f9d" stroke-width="1.2"/><path d="M356 11.5 V17.5 H366 V11.5 M356 29.5 V22.5 H367 V29.5 M359 25 V29" fill="none" stroke="#a19f9d" stroke-width="1.2"/>
<path d="M431.5 11.5 L449.5 29.5 M449.5 11.5 L431.5 29.5" stroke="#a19f9d" stroke-width="1.3"/>
<path d="M530 20.8 H548.5 M541.5 13.8 L548.5 20.8 L541.5 27.8" fill="none" stroke="#0078d4" stroke-width="1.4"/>
<path d="M714.5 13 A9 9 0 1 0 719.5 11.5" fill="none" stroke="#0078d4" stroke-width="1.4"/><path d="M712 11 H716 V15" fill="none" stroke="#0078d4" stroke-width="1.3"/>
<rect x="808.5" y="11" width="1" height="20" fill="#c8c6c4"/>
<path d="M836.5 16.5 V11.5 H848 V20 H844 L841.5 22.5" fill="none" stroke="#0078d4" stroke-width="1.3"/><circle cx="834.5" cy="20.5" r="3.7" fill="none" stroke="#0078d4" stroke-width="1.3"/><path d="M829 30.5 Q829.5 24.5 834.5 24.5 Q839.5 24.5 840 30.5" fill="none" stroke="#0078d4" stroke-width="1.3"/><path d="M842 17.5 L843.5 19 L846.5 15.5" fill="none" stroke="#0078d4" stroke-width="1.1"/>
</svg>
<div class="t" style="left:379.66px;top:303.83px;font-size:15.2px;color:#a19f9d;transform:scaleX(0.9619);transform-origin:0 0;">Save</div>

<div class="t" style="left:459.86px;top:303.83px;font-size:15.2px;color:#a19f9d;transform:scaleX(1.0020);transform-origin:0 0;">Discard</div>

<div class="t" style="left:558.86px;top:303.83px;font-size:15.2px;color:#323130;transform:scaleX(1.0260);transform-origin:0 0;">Prepare for failover</div>

<div class="t" style="left:738.36px;top:303.83px;font-size:15.2px;color:#323130;transform:scaleX(0.9850);transform-origin:0 0;">Refresh</div>

<div class="t" style="left:857.5600000000001px;top:303.83px;font-size:15.2px;color:#323130;transform:scaleX(1.0130);transform-origin:0 0;">Give feedback</div>

<div class="a" style="left:342px;top:333px;width:1554px;height:1px;background:#d2d0ce"></div>
<div class="a" style="left:320px;top:334px;width:1575px;height:686px;overflow:hidden">
<div class="a" style="left:-320px;top:-334px;width:1920px;height:1020px">
<div class="t" style="left:342.86px;top:328.83px;font-size:15.2px;color:#323130;transform:scaleX(1.0226);transform-origin:0 0;">Azure Storage redundancy copies your data so that it is protected from transient hardware failures, network or power outages, and natural disasters. If an outage</div>

<div class="t" style="left:341.36px;top:350.13px;font-size:15.2px;color:#323130;transform:scaleX(1.0300);transform-origin:0 0;">renders the primary endpoint unavailable, then you can initiate a failover to the secondary endpoint to rapidly restore write access to your data.</div>

<div class="t" style="left:341.36px;top:370.43px;font-size:15.2px;color:#1b7fd5;transform:scaleX(1.0281);transform-origin:0 0;">Learn more about storage account failover</div>

<div class="t" style="left:341.1375px;top:418.98px;font-size:15.5px;color:#323130;transform:scaleX(0.9900);transform-origin:0 0;">Redundancy</div>

<div class="a" style="left:642px;top:412px;width:852px;height:28px;border:1px solid #8a8886;border-radius:2px"></div>
<div class="t" style="left:651.8375px;top:418.98px;font-size:15.5px;color:#323130;transform:scaleX(0.9840);transform-origin:0 0;">Geo-redundant storage (GRS)</div>

<div class="t" style="left:340.8375px;top:491.08px;font-size:15.5px;color:#323130;transform:scaleX(1.0172);transform-origin:0 0;">Last failover time</div>

<div class="t" style="left:642.0375px;top:491.08px;font-size:15.5px;color:#323130;">-</div>

<div class="t" style="left:340.8375px;top:541.18px;font-size:15.5px;color:#323130;transform:scaleX(1.0163);transform-origin:0 0;">Storage endpoints</div>

<div class="t" style="left:640.8375px;top:541.18px;font-size:15.5px;color:#1b7fd5;transform:scaleX(1.0252);transform-origin:0 0;">View all</div>

<div class="t" style="left:353.28999999999996px;top:619.97px;font-size:14.8px;color:#323130;transform:scaleX(1.1093);transform-origin:0 0;-webkit-text-stroke:0.36px #323130;">Location</div>

<div class="t" style="left:640.89px;top:619.97px;font-size:14.8px;color:#323130;transform:scaleX(1.0965);transform-origin:0 0;-webkit-text-stroke:0.36px #323130;">Data center type</div>

<div class="t" style="left:928.89px;top:619.97px;font-size:14.8px;color:#323130;transform:scaleX(1.0814);transform-origin:0 0;-webkit-text-stroke:0.36px #323130;">Status</div>

<div class="t" style="left:1216.89px;top:619.97px;font-size:14.8px;color:#323130;transform:scaleX(1.0709);transform-origin:0 0;-webkit-text-stroke:0.36px #323130;">Failover</div>

<div class="a" style="left:342px;top:646px;width:1152px;height:1px;background:#e1dfdd"></div>
<div class="a" style="left:342px;top:685px;width:1152px;height:1px;background:#c8c6c4"></div>
<div class="a" style="left:342px;top:723px;width:1152px;height:1px;background:#c8c6c4"></div>
<div class="t" style="left:379.8375px;top:659.78px;font-size:15.5px;color:#323130;transform:scaleX(0.9176);transform-origin:0 0;">East US</div>

<div class="t" style="left:640.8375px;top:659.78px;font-size:15.5px;color:#323130;transform:scaleX(1.0202);transform-origin:0 0;">Primary</div>

<div class="t" style="left:928.8375px;top:659.78px;font-size:15.5px;color:#323130;transform:scaleX(1.0087);transform-origin:0 0;">Available</div>

<div class="t" style="left:1218.375px;top:660.20px;font-size:15.0px;color:#323130;">-</div>

<div class="t" style="left:379.8375px;top:697.68px;font-size:15.5px;color:#323130;transform:scaleX(0.9623);transform-origin:0 0;">West US</div>

<div class="t" style="left:640.8375px;top:697.68px;font-size:15.5px;color:#323130;transform:scaleX(0.9982);transform-origin:0 0;">Secondary</div>

<div class="t" style="left:928.8375px;top:697.68px;font-size:15.5px;color:#323130;transform:scaleX(1.0087);transform-origin:0 0;">Available</div>

<div class="t" style="left:1218.375px;top:698.10px;font-size:15.0px;color:#323130;">-</div>

<svg style="left:0;top:0" width="1920" height="1020">
<path d="M644.5 373.5 H640.5 V382.5 H649.5 V378.5 M645 377.5 L652 370.8 M648 370.8 H652.2 V374.8" fill="none" stroke="#1b7fd5" stroke-width="0.9"/>
<circle cx="444.5" cy="426.5" r="6.8" fill="none" stroke="#605e5c" stroke-width="1"/><path d="M444.5 425 V430.5" stroke="#605e5c" stroke-width="1.2"/><circle cx="444.5" cy="422.5" r=".8" fill="#605e5c"/>
<path d="M1467 422.5 L1475.5 431 L1484 422.5" fill="none" stroke="#323130" stroke-width="1.3"/>
<path d="M356.5 663.0 A7.0 7.0 0 0 1 370.5 663.0 Q370.5 669.3 363.5 675.5 Q356.5 669.3 356.5 663.0Z" fill="#0f6fcc"/>
<path d="M356.5 701.5 A7.0 7.0 0 0 1 370.5 701.5 Q370.5 707.8 363.5 714.0 Q356.5 707.8 356.5 701.5Z" fill="#5aa60f"/>
<path d="M365.0 882.0 L386.0 874.0 L395.0 870.0 L384.0 869.0 L379.0 863.0 L381.0 859.0 L397.0 855.0 L402.0 851.0 L386.0 850.0 L387.0 846.0 L400.0 845.6 L399.0 840.0 L412.0 835.0 L432.0 832.0 L442.0 833.0 L461.0 835.0 L474.0 839.0 L481.0 836.0 L499.0 835.0 L506.7 835.4 L516.7 836.7 L525.0 839.2 L529.0 840.8 L538.3 840.0 L550.0 840.0 L558.3 841.7 L566.7 840.8 L570.8 842.5 L575.0 840.0 L576.7 835.0 L581.7 830.8 L585.8 830.8 L587.5 836.7 L591.7 839.2 L592.5 843.3 L600.0 838.3 L602.5 835.8 L608.3 836.7 L610.0 839.2 L607.5 843.3 L602.5 845.8 L593.3 846.7 L583.3 853.3 L575.0 855.8 L566.7 860.8 L560.0 866.7 L560.0 871.0 L564.0 874.0 L572.5 876.0 L581.0 879.0 L585.6 882.5 L586.0 889.0 L590.0 891.0 L593.0 886.0 L594.4 880.0 L601.0 879.0 L603.8 875.0 L602.5 870.0 L607.5 858.3 L618.3 858.3 L627.5 862.5 L628.3 870.0 L633.3 869.2 L640.0 864.2 L643.3 870.0 L645.0 875.0 L652.5 882.5 L656.0 888.0 L654.0 891.0 L645.0 893.0 L630.0 896.0 L610.0 905.0 L620.0 907.5 L630.0 905.0 L637.5 906.0 L625.0 912.5 L612.5 917.5 L608.8 920.0 L599.0 923.0 L591.6 929.4 L587.0 937.0 L577.5 945.0 L571.0 951.0 L570.5 960.6 L569.0 970.0 L566.6 968.4 L563.0 959.0 L559.0 955.0 L546.0 955.0 L537.0 956.0 L526.0 959.0 L519.7 967.0 L517.0 978.0 L521.0 989.0 L530.6 989.0 L538.0 981.0 L548.0 980.0 L543.0 989.0 L541.6 996.6 L552.5 998.0 L557.0 1001.0 L557.0 1010.6 L568.0 1022.0 L555.6 1022.0 L549.0 1010.6 L537.0 1001.0 L518.0 996.6 L512.3 995.8 L502.7 991.7 L494.5 986.2 L493.1 979.3 L486.2 968.4 L482.1 961.5 L477.3 951.2 L473.2 950.5 L476.0 953.3 L478.0 961.5 L483.5 973.9 L483.5 976.6 L482.1 975.2 L476.6 969.7 L469.8 962.2 L468.4 953.3 L465.7 945.0 L456.7 939.6 L454.7 924.5 L456.7 919.0 L461.5 912.0 L463.6 901.2 L463.0 894.3 L458.8 890.2 L456.0 882.0 L454.7 872.3 L442.3 866.9 L435.0 865.0 L425.0 862.5 L417.0 865.0 L411.0 868.0 L405.0 872.5 L396.0 871.0 L380.0 878.0ZM594.2 832.5 L600.0 825.8 L608.3 824.6 L618.3 824.2 L628.3 825.0 L633.3 830.8 L643.3 833.3 L645.8 838.3 L640.8 840.0 L654.2 845.0 L646.7 850.0 L640.0 848.3 L643.3 855.0 L636.7 859.2 L625.0 855.8 L618.3 850.8 L610.0 851.7 L610.8 849.2 L621.7 848.3 L628.3 843.3 L621.7 837.5 L610.8 836.2 L601.7 835.4 L595.0 835.0ZM789.1 937.5 L779.8 934.5 L778.3 928.6 L779.8 916.9 L783.7 913.9 L801.4 913.9 L801.9 906.1 L793.5 900.2 L801.4 896.8 L811.2 892.4 L819.0 886.5 L828.8 883.5 L829.8 874.7 L834.7 872.7 L837.0 871.0 L835.0 868.5 L827.0 871.0 L822.0 869.0 L821.0 860.0 L830.0 855.0 L837.5 851.0 L846.0 841.0 L857.5 835.0 L870.0 832.5 L882.5 833.8 L886.0 835.6 L898.8 838.8 L910.0 842.5 L911.0 845.0 L903.8 848.0 L895.0 845.6 L898.8 852.5 L903.8 853.8 L911.0 850.0 L917.5 846.0 L916.0 840.0 L925.0 841.0 L927.0 845.0 L942.5 839.4 L957.5 837.0 L977.5 840.0 L979.0 841.0 L971.0 832.5 L975.0 827.0 L984.0 827.5 L987.5 833.8 L992.5 842.5 L990.0 846.0 L995.0 840.0 L991.0 830.0 L1000.0 825.0 L1012.5 824.0 L1014.0 819.0 L1020.0 817.5 L1029.4 816.7 L1041.9 813.6 L1048.0 812.8 L1059.0 815.0 L1073.0 818.3 L1066.9 822.2 L1076.0 824.5 L1090.3 825.3 L1101.0 824.5 L1113.8 826.0 L1120.0 830.8 L1126.0 833.0 L1127.8 830.8 L1145.0 830.0 L1141.9 826.9 L1152.8 827.7 L1168.4 830.0 L1177.8 833.0 L1195.0 834.0 L1199.7 837.0 L1216.9 836.2 L1226.0 838.6 L1224.7 835.5 L1245.0 838.6 L1270.0 844.8 L1284.0 847.2 L1282.5 851.9 L1263.8 849.5 L1268.4 857.3 L1254.4 861.2 L1251.2 865.2 L1241.9 865.2 L1235.6 867.5 L1235.6 872.2 L1240.3 876.9 L1238.8 883.0 L1235.6 887.8 L1233.3 891.7 L1223.0 880.0 L1221.6 872.2 L1227.8 864.4 L1230.0 859.7 L1224.7 862.8 L1216.9 861.2 L1210.6 866.0 L1204.4 868.3 L1198.0 866.7 L1181.0 868.3 L1170.0 880.8 L1179.4 883.0 L1185.6 882.3 L1190.3 885.5 L1191.9 897.2 L1184.0 914.4 L1177.8 916.9 L1174.7 916.9 L1170.8 921.6 L1168.4 925.5 L1166.9 928.6 L1170.0 931.0 L1175.5 935.6 L1176.2 939.5 L1170.0 941.9 L1166.9 937.2 L1163.8 932.5 L1160.6 929.4 L1151.2 923.0 L1140.3 928.6 L1145.0 932.5 L1152.8 934.0 L1146.6 938.8 L1149.7 941.9 L1154.4 946.6 L1157.5 951.2 L1159.0 957.5 L1156.0 963.8 L1152.8 970.0 L1145.0 976.2 L1138.8 977.8 L1132.5 981.0 L1126.0 982.5 L1120.0 985.6 L1117.7 988.8 L1123.0 995.0 L1127.8 999.7 L1129.4 1007.5 L1124.7 1012.2 L1118.4 1018.4 L1116.9 1022.0 L1104.4 1022.0 L1099.7 1006.0 L1096.6 1002.8 L1091.9 995.0 L1085.6 996.6 L1082.5 988.8 L1076.2 982.5 L1071.6 977.8 L1060.6 982.5 L1048.0 995.0 L1041.9 998.0 L1038.8 1010.6 L1035.6 1022.0 L1032.5 1010.6 L1023.0 995.0 L1018.4 982.5 L1007.5 977.8 L999.7 970.0 L988.8 970.0 L976.2 968.4 L971.6 970.0 L980.0 977.8 L971.6 988.8 L957.5 999.7 L941.9 1004.4 L932.5 1007.5 L934.0 1012.2 L956.0 1009.0 L954.4 1022.0 L752.5 1022.0 L754.0 1001.0 L754.0 990.3 L755.6 979.4 L762.0 967.0 L768.0 959.0 L772.0 960.0 L776.9 952.2 L778.8 946.3 L784.7 942.4ZM509.2 830.0 L519.2 822.5 L535.0 823.3 L539.2 826.7 L525.0 830.0 L512.5 832.5ZM524.2 831.7 L538.3 826.7 L546.7 827.5 L551.7 826.7 L555.0 825.8 L560.0 825.0 L563.3 825.8 L558.3 830.0 L563.3 835.8 L558.3 838.3 L550.0 838.3 L541.7 839.2 L529.2 839.2 L525.0 837.5ZM565.8 837.5 L570.8 835.4 L575.0 837.5 L573.3 839.2 L568.3 839.2ZM566.7 828.3 L573.3 824.2 L581.7 825.0 L580.0 830.0 L573.3 831.7ZM582.5 828.3 L587.5 823.3 L597.5 824.2 L590.0 828.3 L585.0 830.8ZM586.7 854.2 L593.3 848.3 L604.2 854.2 L598.3 855.8 L590.0 856.7ZM530.0 817.5 L538.3 815.0 L550.0 812.5 L546.7 815.8 L537.5 817.9ZM538.3 819.6 L545.0 816.7 L559.2 816.7 L561.7 815.0 L566.7 816.7 L567.5 820.8 L558.3 820.8 L546.7 822.5 L540.0 820.8ZM556.7 812.5 L561.7 810.0 L568.3 809.6 L566.7 811.7 L560.0 813.3ZM577.5 810.4 L580.0 807.9 L588.3 809.2 L588.3 811.7 L583.3 811.7ZM592.5 810.8 L595.8 809.2 L600.0 810.8 L600.8 813.3 L594.2 812.5ZM575.0 818.3 L580.0 815.8 L587.5 815.8 L586.7 820.0 L578.3 820.8ZM586.7 820.8 L590.0 819.2 L593.3 820.0 L592.5 821.7 L587.5 821.7ZM590.8 815.0 L596.7 814.2 L603.3 815.8 L605.0 818.8 L625.0 818.8 L625.0 821.7 L608.3 822.5 L596.7 821.7 L595.8 817.5ZM601.7 805.8 L608.3 802.5 L618.3 801.7 L620.0 799.2 L633.3 797.5 L645.8 796.2 L666.0 795.6 L683.8 797.5 L680.0 800.6 L668.8 803.8 L660.0 806.7 L643.3 808.3 L633.3 813.3 L620.8 815.8 L607.5 816.7 L615.0 812.5 L620.0 810.8 L606.7 810.0ZM648.8 811.0 L655.0 808.8 L668.8 805.0 L680.0 800.6 L697.5 799.4 L715.0 798.8 L722.5 796.0 L747.5 795.0 L770.0 796.9 L765.0 800.0 L786.0 801.0 L782.5 803.8 L770.0 806.0 L768.8 813.8 L765.0 818.8 L765.0 823.8 L760.0 826.0 L756.0 830.0 L756.0 833.8 L746.0 835.0 L742.5 838.8 L726.0 843.8 L716.0 847.5 L707.5 851.0 L702.5 856.0 L697.5 861.0 L693.8 865.6 L690.0 865.0 L682.5 862.5 L678.8 857.5 L676.0 851.0 L674.4 845.0 L678.8 840.0 L677.0 836.0 L680.0 831.0 L678.8 827.5 L675.0 820.0 L670.0 817.5 L655.0 817.0 L650.0 815.0ZM747.5 847.5 L752.5 846.0 L761.0 847.0 L772.5 846.0 L774.4 850.0 L770.0 853.0 L760.0 855.0 L751.0 853.0 L749.0 850.0ZM642.5 900.0 L647.5 893.8 L655.0 896.0 L660.0 899.0 L660.6 905.0 L655.0 903.8 L647.5 902.5ZM791.1 874.7 L793.5 869.3 L799.4 869.3 L802.4 872.7 L800.4 877.6 L807.3 883.5 L811.2 888.4 L810.2 891.4 L802.4 893.3 L791.1 895.3 L797.5 890.4 L794.5 884.5 L793.5 879.6ZM779.8 889.4 L781.8 883.5 L789.6 880.1 L791.1 884.5 L789.6 888.4 L782.7 890.9ZM835.0 806.2 L845.0 805.0 L855.0 803.8 L871.2 805.0 L867.5 807.5 L860.0 808.8 L850.0 815.0 L842.5 812.5ZM858.0 811.0 L865.0 811.0 L866.0 813.0 L859.0 813.5ZM909.4 803.0 L923.8 803.0 L920.0 805.0 L912.0 805.0ZM933.8 830.0 L938.8 822.5 L948.8 817.5 L967.5 815.0 L967.5 817.5 L952.5 821.2 L943.8 826.2 L942.5 831.2 L948.0 833.8 L938.8 833.8ZM1010.0 803.8 L1020.0 802.7 L1032.5 809.0 L1034.0 807.3 L1045.8 811.2 L1035.0 811.0 L1022.0 808.0ZM1126.0 817.5 L1145.8 819.0 L1145.8 821.4 L1130.0 821.0ZM1148.0 819.0 L1160.0 820.0 L1160.0 821.4 L1150.0 821.0ZM1140.3 824.5 L1149.7 824.5 L1149.7 826.0 L1141.0 826.0ZM1240.0 831.0 L1249.0 830.8 L1249.0 833.0 L1241.0 833.0ZM1287.0 852.5 L1293.0 853.5 L1295.5 855.5 L1290.0 855.0ZM1189.5 882.3 L1196.6 892.5 L1203.6 898.0 L1201.2 903.4 L1204.4 906.6 L1199.7 905.0 L1195.0 895.6 L1191.0 889.4ZM1199.7 909.0 L1207.5 912.2 L1213.8 914.5 L1209.0 919.2 L1201.2 920.0 L1198.0 916.9ZM1201.2 921.6 L1207.5 926.2 L1209.0 938.8 L1196.6 945.0 L1188.8 943.4 L1182.5 945.0 L1184.0 951.2 L1179.4 948.0 L1181.0 941.9 L1188.8 938.8 L1195.0 935.6 L1202.8 929.4ZM1157.5 970.0 L1161.4 969.2 L1162.2 979.4 L1158.3 977.8ZM1126.0 983.0 L1131.0 982.5 L1131.0 990.0 L1126.5 989.0ZM1160.6 990.3 L1166.0 989.5 L1166.9 995.0 L1163.8 1002.8 L1171.6 1004.4 L1177.8 1010.6 L1181.0 1022.0 L1170.0 1022.0 L1166.9 1010.6 L1162.2 1007.5ZM1152.0 1022.0 L1158.0 1010.0 L1161.0 1012.0 L1160.0 1022.0ZM554.8 979.4 L563.4 975.5 L574.4 977.8 L585.3 984.0 L583.8 985.6 L574.4 982.5 L565.0 979.4 L555.6 980.0ZM584.5 989.5 L590.0 985.6 L599.4 987.2 L602.5 990.3 L593.0 991.0ZM572.8 990.3 L579.0 990.5 L578.5 992.0 L573.0 992.0ZM605.6 989.5 L610.3 989.8 L610.0 991.0 L605.6 991.0ZM574.4 964.5 L580.0 965.0 L579.0 967.0 L575.0 966.5ZM575.0 970.0 L577.5 970.0 L577.0 974.0 L575.5 973.5ZM568.0 1022.0 L577.5 1016.9 L585.3 1013.8 L591.6 1009.0 L596.2 1009.8 L602.5 1012.2 L615.0 1013.8 L622.8 1012.2 L624.4 1022.0ZM447.8 883.3 L452.0 882.6 L458.8 888.8 L457.4 889.5 L450.6 888.1Z" fill="#dde0e4" stroke="#d3d6dc" stroke-width="0.6"/><path d="M789.1 937.5 L797.5 938.4 L809.2 935.5 L823.9 933.5 L834.7 933.5 L836.7 938.4 L835.7 943.3 L848.4 948.2 L860.2 953.1 L866.1 947.3 L877.8 949.2 L887.6 952.2 L902.4 951.2 L907.3 943.3 L908.2 935.5 L897.5 936.5 L887.6 935.5 L882.7 930.6 L880.8 926.7 L876.9 923.7 L872.0 924.7 L872.9 930.6 L870.0 935.5 L864.1 930.6 L860.2 924.7 L853.3 916.9 L844.5 909.0 L841.6 909.0 L842.5 912.9 L851.4 920.8 L857.3 924.7 L854.3 927.6 L851.4 931.6 L848.4 927.6 L838.6 918.8 L832.7 913.9 L824.9 914.9 L815.1 916.9 L809.2 921.8 L805.3 927.6 L799.4 934.5 L792.5 936.5ZM884.7 916.9 L887.6 909.0 L892.5 906.1 L897.5 908.0 L900.4 911.0 L904.3 907.1 L914.1 904.1 L910.2 909.0 L913.1 912.9 L922.0 917.8 L921.0 920.8 L909.2 921.8 L897.5 919.8 L887.6 920.8 L883.7 919.8ZM937.2 910.6 L943.4 906.7 L953.6 906.0 L952.8 909.0 L946.6 912.2 L954.4 920.0 L959.0 921.6 L957.5 923.0 L959.0 934.0 L951.2 934.8 L945.0 929.4 L946.6 921.6 L941.9 915.3ZM899.7 955.5 L905.5 964.5 L912.5 977.0 L919.5 991.0 L930.0 1005.5 L933.5 1006.5 L925.5 993.4 L918.8 979.4 L910.5 964.5 L904.4 957.0ZM945.0 956.0 L949.7 955.2 L957.5 963.8 L968.4 965.3 L971.6 970.0 L962.2 973.0 L954.4 970.0 L946.6 962.2ZM838.6 869.8 L834.7 874.7 L833.7 879.6 L838.6 882.5 L845.5 883.5 L854.3 880.6 L862.2 879.6 L864.1 872.7 L871.0 872.7 L869.0 867.8 L882.7 865.4 L881.8 863.9 L868.0 865.9 L862.5 861.2 L863.8 855.0 L872.5 850.6 L871.2 848.8 L862.5 850.0 L856.2 856.2 L853.0 861.2 L856.3 864.9 L851.4 874.7 L844.5 877.6 L840.6 872.7Z" fill="#fff" stroke="#d3d6dc" stroke-width="0.6"/><path d="M829.5 916.0 L833.2 916.5 L833.7 928.0 L829.5 928.6ZM841.6 931.0 L848.4 930.6 L847.5 934.5 L843.0 934.0ZM873.0 938.8 L880.8 938.6 L880.5 940.2 L873.5 940.4ZM898.4 939.5 L904.3 938.4 L903.0 941.0 L899.0 941.4Z" fill="#dde0e4"/>
<path d="M450.5 928.5 A6.0 6.0 0 0 1 462.5 928.5 Q462.5 933.9 456.5 940.0 Q450.5 933.9 450.5 928.5Z" fill="#5aa60f"/>
<path d="M571.0 929.5 A6.0 6.0 0 0 1 583.0 929.5 Q583.0 934.9 577 941.0 Q571.0 934.9 571.0 929.5Z" fill="#0f6fcc"/>
</svg>
</div></div>
<div class="a" style="left:1895px;top:334px;width:25px;height:686px;background:#f1f1f1"></div>
<div class="a" style="left:1897px;top:372px;width:21px;height:441.5px;background:#c1c1c1"></div>
<svg style="left:0;top:0" width="1920" height="1020"><path d="M1902 350 L1907.5 344 L1913 350Z" fill="#505050"/><path d="M1901.8 1005 L1907.5 1011 L1913.2 1005Z" fill="#505050"/></svg>
<svg style="left:0;top:0;z-index:5" width="1920" height="1020"><defs><filter id="sh" x="-20%" y="-20%" width="140%" height="140%"><feGaussianBlur in="SourceAlpha" stdDeviation="2.5"/><feOffset dx="2" dy="3"/><feComponentTransfer><feFuncA type="linear" slope="0.45"/></feComponentTransfer><feMerge><feMergeNode/><feMergeNode in="SourceGraphic"/></feMerge></filter><filter id="sh2" x="-20%" y="-30%" width="140%" height="160%"><feGaussianBlur in="SourceAlpha" stdDeviation="2.8"/><feOffset dx="0.5" dy="1.5"/><feComponentTransfer><feFuncA type="linear" slope="0.5"/></feComponentTransfer><feMerge><feMergeNode/><feMergeNode in="SourceGraphic"/></feMerge></filter></defs>
<rect x="9" y="632" width="169" height="43.5" rx="6" fill="none" stroke="#f01010" stroke-width="2" filter="url(#sh2)"/>
<path d="M308.5 543.3 Q310.8 543.6 310.4 545.8 L165 639.5 L169 643 L141 646.5 L157.5 623 L164.5 626.3 Z" fill="#ff0000" filter="url(#sh)"/>
</svg>
<div class="t" style="left:47.5px;top:943.5px;font-size:26.5px;color:#fff;z-index:7;line-height:1;-webkit-text-stroke:0.5px #fff">Alt+A</div>
<svg style="left:0;top:0;z-index:7" width="300" height="1020"><path d="M128.5 959.5 H131 L132.5 955.5 L134 963 L136 953 L138 966 L140 956 L141.5 961 L143 959.5 H145" fill="none" stroke="#fff" stroke-width="1.3"/></svg>
</body></html>
